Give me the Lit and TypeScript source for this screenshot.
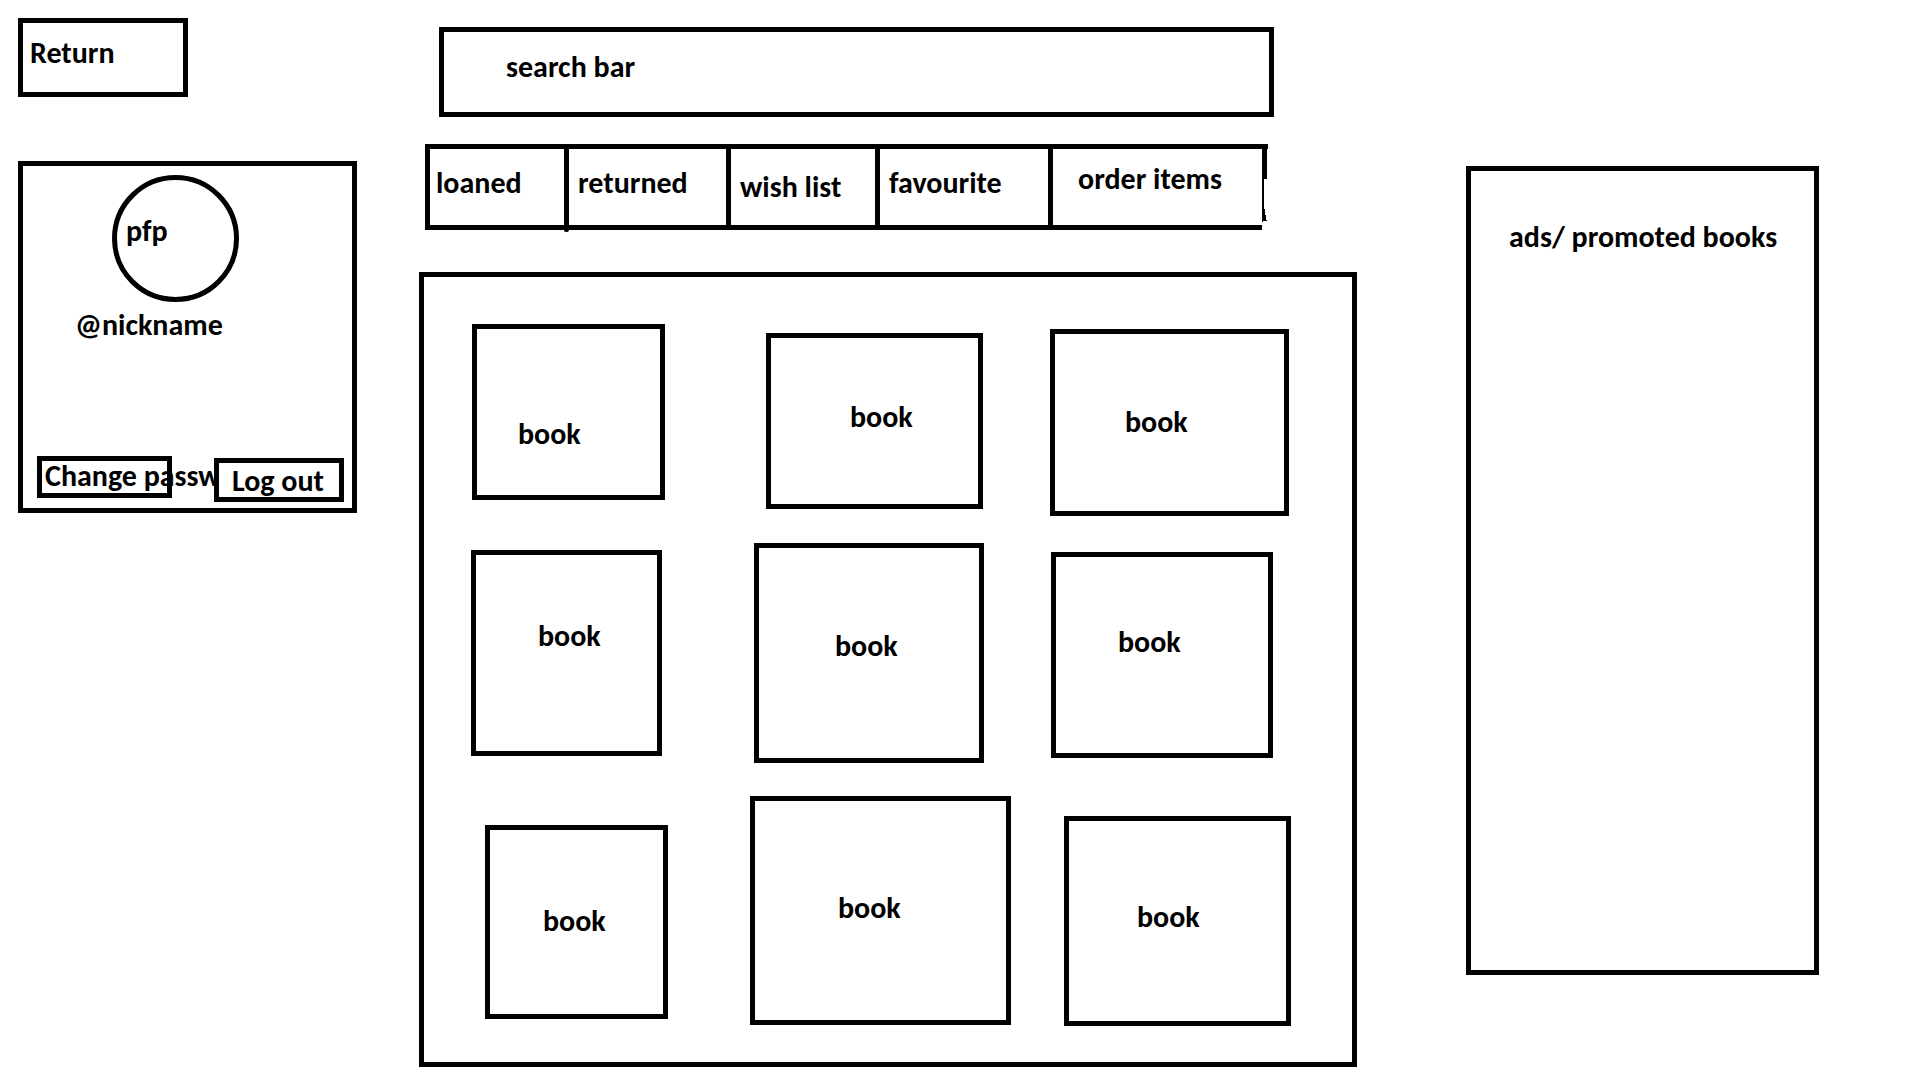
import { LitElement, html, css } from "lit";
import { customElement } from "lit/decorators.js";
import { styleMap } from "lit/directives/style-map.js";

interface Book {
  label: string;
  before: number; // free space to the left, as a share of the row
  width: number; // share of the row
  drop: number; // distance below the row's top edge
  height: number;
  labelX: number;
  labelY: number;
}

interface Shelf {
  books: Book[];
  after: number; // free space right of the last book
}

const book = (
  before: number,
  width: number,
  drop: number,
  height: number,
  labelX: number,
  labelY: number
): Book => ({ label: "book", before, width, drop, height, labelX, labelY });

const SHELVES: Shelf[] = [
  {
    books: [
      book(48, 193, 0, 176, 41, 87),
      book(101, 217, 9, 176, 79, 61),
      book(67, 239, 5, 187, 70, 70),
    ],
    after: 63,
  },
  {
    books: [
      book(47, 191, 7, 206, 62, 63),
      book(92, 230, 0, 220, 76, 80),
      book(67, 222, 9, 206, 62, 67),
    ],
    after: 79,
  },
  {
    books: [
      book(61, 183, 35, 194, 53, 73),
      book(82, 261, 6, 229, 83, 89),
      book(53, 227, 26, 210, 68, 78),
    ],
    after: 61,
  },
];

const TABS = [
  { label: "loaned", tone: "tight" },
  { label: "returned", tone: "" },
  { label: "wish list", tone: "low" },
  { label: "favourite", tone: "" },
  { label: "order items", tone: "inset" },
];

@customElement("book-shelf-grid")
export class BookShelfGrid extends LitElement {
  static styles = css`
    :host {
      display: flex;
      flex-direction: column;
      gap: 27px;
      box-sizing: border-box;
      border: 5px solid #000;
      padding: 47px 0 36px;
    }
    .shelf {
      display: grid;
      align-items: start;
    }
    .book {
      box-sizing: border-box;
      border: 5px solid #000;
      min-width: 0;
    }
    .title {
      margin: 0;
      font: inherit;
    }
  `;

  private columns(shelf: Shelf): string {
    const tracks = shelf.books.map(
      (b) => `minmax(0, ${b.before}fr) minmax(0, ${b.width}fr)`
    );
    return `${tracks.join(" ")} minmax(0, ${shelf.after}fr)`;
  }

  render() {
    return SHELVES.map(
      (shelf) => html`
        <div
          class="shelf"
          style=${styleMap({ gridTemplateColumns: this.columns(shelf) })}
        >
          ${shelf.books.map(
            (b, i) => html`
              <article
                class="book"
                style=${styleMap({
                  gridColumn: String(i * 2 + 2),
                  marginTop: `${b.drop}px`,
                  minHeight: `${b.height}px`,
                  padding: `${b.labelY}px 0 0 ${b.labelX}px`,
                })}
              >
                <h2 class="title">${b.label}</h2>
              </article>
            `
          )}
        </div>
      `
    );
  }
}

@customElement("app-root")
export class AppRoot extends LitElement {
  static styles = css`
    :host {
      display: block;
      min-height: 100vh;
      box-sizing: border-box;
      background: #fff;
      color: #000;
      font: 700 30px/36px Calibri, Carlito, Lato, sans-serif;
    }
    *,
    *::before,
    *::after {
      box-sizing: border-box;
    }
    button,
    input {
      margin: 0;
      border: 5px solid #000;
      border-radius: 0;
      background: #fff;
      color: inherit;
      font: inherit;
      text-align: left;
    }
    button {
      display: flex;
      align-items: flex-start;
      justify-content: flex-start;
      white-space: nowrap;
      cursor: pointer;
    }
    .page {
      display: grid;
      grid-template-columns: minmax(0, 339fr) minmax(0, 938fr) minmax(0, 400fr);
      column-gap: 62px;
      align-items: start;
      padding: 0 101px 13px 18px;
    }
    .side {
      display: flex;
      flex-direction: column;
      align-items: flex-start;
      gap: 64px;
      padding-top: 18px;
    }
    .return {
      width: 170px;
      height: 79px;
      padding: 12px 7px;
    }
    .profile {
      display: flex;
      flex-direction: column;
      width: 100%;
      min-height: 352px;
      border: 5px solid #000;
      padding: 9px 8px 6px 14px;
    }
    .avatar {
      width: 127px;
      height: 127px;
      margin-left: 75px;
      border: 5px solid #000;
      border-radius: 50%;
      padding: 33px 9px;
    }
    .nickname {
      margin: 5px 0 0 38px;
    }
    .actions {
      display: flex;
      align-items: flex-end;
      justify-content: space-between;
      margin-top: auto;
    }
    .change {
      width: 135px;
      height: 42px;
      margin-bottom: 4px;
      padding: 0 3px;
      line-height: 30px;
    }
    /* Sits on top of the neighbouring label where it runs out of its box. */
    .logout {
      position: relative;
      width: 130px;
      height: 44px;
      padding: 0 13px;
    }
    .content {
      display: flex;
      flex-direction: column;
      padding-top: 27px;
    }
    .search {
      display: flex;
      margin: 0 83px 27px 20px;
    }
    .field {
      flex: 1;
      min-width: 0;
      height: 90px;
      padding: 0 62px 12px;
      outline: none;
    }
    .field::placeholder {
      color: #000;
      opacity: 1;
    }
    .tabs {
      display: grid;
      grid-template-columns:
        minmax(0, 139fr) minmax(0, 162fr) minmax(0, 149fr) minmax(0, 173fr)
        minmax(0, 214fr) 6px;
      margin: 0 89px 42px 6px;
      border-top: 5px solid #000;
    }
    .tab {
      position: relative;
      height: 81px;
      border-width: 0 0 5px 5px;
      padding: 16px 9px 0;
    }
    .tab.tight {
      padding-left: 6px;
    }
    .tab.low {
      padding-top: 20px;
    }
    .tab.inset {
      padding: 12px 0 0 25px;
    }
    .tab:nth-child(2)::after {
      content: "";
      position: absolute;
      left: -5px;
      bottom: -7px;
      width: 5px;
      height: 4px;
      border-radius: 0 0 2px 2px;
      background: #000;
    }
    .edge {
      display: block;
      width: 6px;
      height: 81px;
    }
    .promo {
      margin: 166px 0 0 47px;
      min-height: 809px;
      border: 5px solid #000;
      padding: 48px 0 0 38px;
    }
    .heading {
      margin: 0;
      font: inherit;
      white-space: nowrap;
    }
  `;

  render() {
    return html`
      <div class="page">
        <div class="side">
          <button class="return" type="button">Return</button>
          <section class="profile" aria-label="Profile">
            <div class="avatar">pfp</div>
            <div class="nickname">@nickname</div>
            <div class="actions">
              <button class="change" type="button">Change passw</button>
              <button class="logout" type="button">Log out</button>
            </div>
          </section>
        </div>

        <main class="content">
          <form class="search" role="search">
            <input
              class="field"
              type="search"
              aria-label="search bar"
              placeholder="search bar"
            />
          </form>
          <nav class="tabs">
            ${TABS.map(
              (t) =>
                html`<button class="tab ${t.tone}" type="button">
                  ${t.label}
                </button>`
            )}
            <svg class="edge" viewBox="0 0 6 81" aria-hidden="true">
              <path
                d="M0 0H5V30H2V60H3V66H4V71H5V72H1V73H0Z"
                shape-rendering="crispEdges"
              />
            </svg>
          </nav>
          <book-shelf-grid></book-shelf-grid>
        </main>

        <aside class="promo">
          <h2 class="heading">ads/ promoted books</h2>
        </aside>
      </div>
    `;
  }
}
